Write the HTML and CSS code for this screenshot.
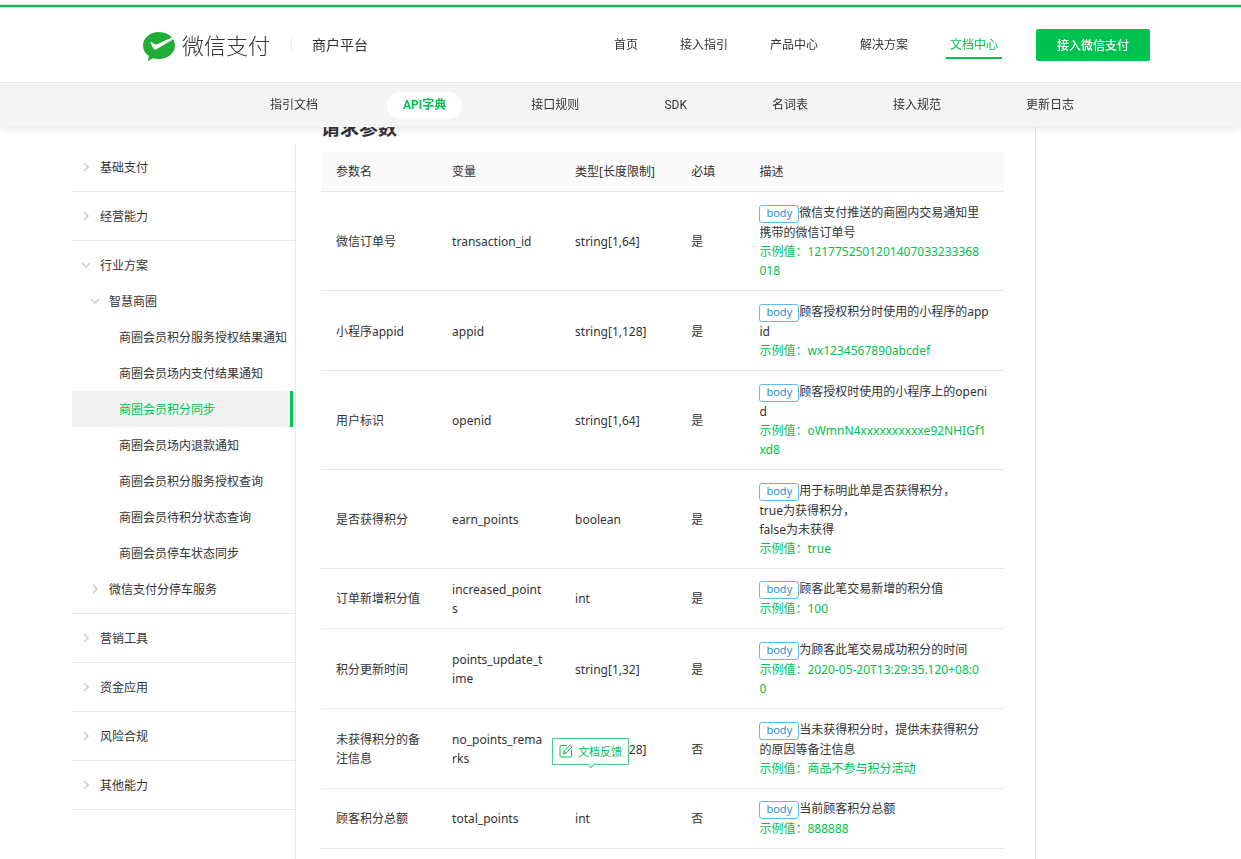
FILE: index.html
```
<!DOCTYPE html>
<html lang="zh-CN">
<head>
    <meta charset="UTF-8">
    <meta name="viewport" content="width=device-width, initial-scale=1.0">
    <title>微信支付商户平台文档中心</title>
    <link rel="stylesheet" href="styles.css">
</head>
<body>
    <svg class="symbols" width="0" height="0" aria-hidden="true">
        <symbol id="arrow" viewBox="0 0 10 10">
            <path d="M3 1l4 4-4 4" fill="none" stroke="currentColor" stroke-width="1.5"/>
        </symbol>
    </svg>

    <header class="page-header">
        <div class="top-line"></div>
        <div class="brand-bar">
            <a class="logo" href="#">
                <svg class="logo-icon" width="34" height="30" viewBox="0 0 34 30">
                    <path d="M17 0C8 0 1 6 1 13.5c0 4.3 2.2 8 5.800 10.5L6 29l5-2.800c1.900.6 3.900.8 6 .8 9 0 16-6 16-13.5 0-2.200-.6-4.300-1.700-6.200L14 17.5c-1 .5-2 .2-2.500-.8L8.600 10.900c-.3-.8.4-1.300 1-.9l3.300 2.300c.5.300 1 .4 1.600.1L30 5.400C27 2.100 22.300 0 17 0z" fill="#22ac38"/>
                </svg>
                <span class="logo-text">微信支付</span>
            </a>
            <span class="platform">商户平台</span>
            <nav class="main-nav">
                <a href="#">首页</a>
                <a href="#">接入指引</a>
                <a href="#">产品中心</a>
                <a href="#">解决方案</a>
                <a href="#" class="active">文档中心</a>
                <button class="join-button">接入微信支付</button>
            </nav>
        </div>
        <nav class="sub-nav">
            <a href="#">指引文档</a>
            <a href="#" class="active">API字典</a>
            <a href="#">接口规则</a>
            <a href="#">SDK</a>
            <a href="#">名词表</a>
            <a href="#">接入规范</a>
            <a href="#">更新日志</a>
        </nav>
    </header>

    <div class="container">
        <aside class="sidebar">
            <div class="group">
                <a href="#" class="level1"><svg class="arrow"><use href="#arrow"/></svg>基础支付</a>
            </div>
            <div class="group">
                <a href="#" class="level1"><svg class="arrow"><use href="#arrow"/></svg>经营能力</a>
            </div>
            <div class="group">
                <a href="#" class="level1"><svg class="arrow open"><use href="#arrow"/></svg>行业方案</a>
                <a href="#" class="level2"><svg class="arrow open"><use href="#arrow"/></svg>智慧商圈</a>
                <a href="#" class="level3">商圈会员积分服务授权结果通知</a>
                <a href="#" class="level3">商圈会员场内支付结果通知</a>
                <a href="#" class="level3 active">商圈会员积分同步</a>
                <a href="#" class="level3">商圈会员场内退款通知</a>
                <a href="#" class="level3">商圈会员积分服务授权查询</a>
                <a href="#" class="level3">商圈会员待积分状态查询</a>
                <a href="#" class="level3">商圈会员停车状态同步</a>
                <a href="#" class="level2"><svg class="arrow"><use href="#arrow"/></svg>微信支付分停车服务</a>
            </div>
            <div class="group">
                <a href="#" class="level1"><svg class="arrow"><use href="#arrow"/></svg>营销工具</a>
            </div>
            <div class="group">
                <a href="#" class="level1"><svg class="arrow"><use href="#arrow"/></svg>资金应用</a>
            </div>
            <div class="group">
                <a href="#" class="level1"><svg class="arrow"><use href="#arrow"/></svg>风险合规</a>
            </div>
            <div class="group">
                <a href="#" class="level1"><svg class="arrow"><use href="#arrow"/></svg>其他能力</a>
            </div>
        </aside>

        <main class="content">
            <h2>请求参数</h2>
            <table>
                <colgroup>
                    <col class="col-name">
                    <col class="col-field">
                    <col class="col-type">
                    <col class="col-required">
                    <col>
                </colgroup>
                <thead>
                    <tr>
                        <th>参数名</th>
                        <th>变量</th>
                        <th>类型[长度限制]</th>
                        <th>必填</th>
                        <th>描述</th>
                    </tr>
                </thead>
                <tbody>
                    <tr>
                        <td>微信订单号</td>
                        <td>transaction_id</td>
                        <td>string[1,64]</td>
                        <td>是</td>
                        <td><span class="tag">body</span>微信支付推送的商圈内交易通知里<br>携带的微信订单号<br><span class="sample">示例值：1217752501201407033233368<br>018</span></td>
                    </tr>
                    <tr>
                        <td>小程序appid</td>
                        <td>appid</td>
                        <td>string[1,128]</td>
                        <td>是</td>
                        <td><span class="tag">body</span>顾客授权积分时使用的小程序的app<br>id<br><span class="sample">示例值：wx1234567890abcdef</span></td>
                    </tr>
                    <tr>
                        <td>用户标识</td>
                        <td>openid</td>
                        <td>string[1,64]</td>
                        <td>是</td>
                        <td><span class="tag">body</span>顾客授权时使用的小程序上的openi<br>d<br><span class="sample">示例值：oWmnN4xxxxxxxxxxe92NHIGf1<br>xd8</span></td>
                    </tr>
                    <tr>
                        <td>是否获得积分</td>
                        <td>earn_points</td>
                        <td>boolean</td>
                        <td>是</td>
                        <td><span class="tag">body</span>用于标明此单是否获得积分，<br>true为获得积分，<br>false为未获得<br><span class="sample">示例值：true</span></td>
                    </tr>
                    <tr class="short">
                        <td>订单新增积分值</td>
                        <td>increased_point<br>s</td>
                        <td>int</td>
                        <td>是</td>
                        <td><span class="tag">body</span>顾客此笔交易新增的积分值<br><span class="sample">示例值：100</span></td>
                    </tr>
                    <tr>
                        <td>积分更新时间</td>
                        <td>points_update_t<br>ime</td>
                        <td>string[1,32]</td>
                        <td>是</td>
                        <td><span class="tag">body</span>为顾客此笔交易成功积分的时间<br><span class="sample">示例值：2020-05-20T13:29:35.120+08:0<br>0</span></td>
                    </tr>
                    <tr>
                        <td>未获得积分的备<br>注信息</td>
                        <td>no_points_rema<br>rks</td>
                        <td>string[1,128]</td>
                        <td>否</td>
                        <td><span class="tag">body</span>当未获得积分时，提供未获得积分<br>的原因等备注信息<br><span class="sample">示例值：商品不参与积分活动</span></td>
                    </tr>
                    <tr class="short">
                        <td>顾客积分总额</td>
                        <td>total_points</td>
                        <td>int</td>
                        <td>否</td>
                        <td><span class="tag">body</span>当前顾客积分总额<br><span class="sample">示例值：888888</span></td>
                    </tr>
                </tbody>
            </table>
        </main>
    </div>

    <button class="feedback">
        <svg width="14" height="14" viewBox="0 0 14 14" fill="none" stroke="currentColor">
            <path d="M8 1.5H2a1 1 0 0 0-1 1V12a1 1 0 0 0 1 1h9.5a1 1 0 0 0 1-1V6"/>
            <path d="M4.5 9.8l.6-2.600L11.300 1l1.900 1.800L7 9.200zM5.100 7.200L7 9.200"/>
        </svg>
        文档反馈
    </button>
</body>
</html>
```
FILE: styles.css
```
* {
    box-sizing: border-box;
}
body {
    margin: 0;
    font-family: "Noto Sans", "Noto Sans CJK SC", sans-serif;
    font-size: 12px;
    line-height: 19px;
    color: #333;
    background: #fff;
}
a {
    color: inherit;
    text-decoration: none;
}
button {
    font-family: inherit;
    cursor: pointer;
}
.symbols {
    position: absolute;
}

/* header */
.page-header {
    position: fixed;
    top: 0;
    left: 0;
    right: 0;
    z-index: 10;
    background: #fff;
    font-family: Roboto, "Noto Sans CJK SC", sans-serif;
    box-shadow: 0 2px 8px rgba(0, 0, 0, 0.1);
}
.top-line {
    margin-top: 4px;
    border-top: 1px solid #e5e5e5;
    border-bottom: 2px solid #00c250;
}
.brand-bar {
    display: flex;
    align-items: center;
    height: 75px;
    padding: 0 91px 0 142px;
}
.logo {
    display: flex;
    align-items: center;
    gap: 6px;
    padding-top: 4px;
    color: #333;
}
.logo-text {
    font-size: 22px;
    line-height: 30px;
    font-weight: 300;
}
.platform {
    margin-left: 21px;
    padding-left: 20px;
    border-left: 1px solid #eee;
    font-size: 14px;
    line-height: 14px;
}
.main-nav {
    display: flex;
    align-items: center;
    gap: 34px;
    margin-left: auto;
}
.main-nav a {
    padding: 6px 4px 2px;
    border-bottom: 2px solid transparent;
}
.main-nav .active {
    color: #00c250;
    border-bottom-color: #00c250;
}
.join-button {
    width: 114px;
    height: 32px;
    border: none;
    border-radius: 2px;
    background: #00c250;
    color: #fff;
    font-size: 12px;
    font-weight: 500;
}
.sub-nav {
    display: flex;
    align-items: center;
    justify-content: center;
    gap: 53px;
    height: 45px;
    padding-left: 103px;
    border-top: 1px solid #e7e7e7;
    background: #f4f4f4;
}
.sub-nav a {
    padding: 4px 16px;
    border-radius: 14px;
}
.sub-nav .active {
    background: #fff;
    color: #00c250;
    font-weight: bold;
}

/* page body */
.container {
    display: flex;
    min-height: 100vh;
    padding: 0 205px 0 72px;
}
.sidebar {
    width: 224px;
    flex-shrink: 0;
    margin-top: 143px;
    border-right: 1px solid #e7e7e7;
}
.group {
    padding: 6px 0;
    border-bottom: 1px solid #e7e7e7;
}
.group a {
    display: flex;
    align-items: center;
    height: 36px;
    margin-right: 2px;
}
.arrow {
    width: 10px;
    height: 10px;
    margin-right: 9px;
    color: #ccc;
}
.arrow.open {
    transform: rotate(90deg);
}
.level1 {
    padding-left: 9px;
}
.level2 {
    padding-left: 18px;
}
.level3 {
    padding-left: 47px;
    white-space: nowrap;
}
.group .active {
    background: #f2f2f2;
    border-right: 3px solid #00c250;
    color: #00c250;
}
.content {
    flex: 1;
    padding: 116px 31px 0 25px;
    border-right: 1px solid #e7e7e7;
}
h2 {
    margin: 0 0 12px;
    font-size: 19px;
    line-height: 24px;
}
table {
    width: 100%;
    table-layout: fixed;
    border-collapse: separate;
    border-spacing: 0;
}
.col-name {
    width: 17%;
}
.col-field {
    width: 18%;
}
.col-type {
    width: 17%;
}
.col-required {
    width: 10%;
}
th, td {
    padding: 10px 0 10px 15px;
    border-bottom: 1px solid #e7e7e7;
    text-align: left;
    font-weight: normal;
    white-space: nowrap;
}
th {
    background: #fafafa;
}
td {
    padding-top: 11px;
}
.short td {
    padding-top: 10px;
}
.tag {
    display: inline-block;
    height: 18px;
    padding: 0 6px;
    border: 1px solid #5bbcf5;
    border-radius: 3px;
    color: #2d8fd8;
    font-size: 11px;
    line-height: 14px;
}
.sample {
    color: #00c250;
}

/* floating feedback button */
.feedback {
    position: fixed;
    left: 552px;
    bottom: 94px;
    display: flex;
    align-items: center;
    gap: 5px;
    height: 27px;
    padding: 0 6px 2px;
    border: 1px solid #51cd8f;
    background: #fff;
    color: #00c250;
    font-size: 11px;
    white-space: nowrap;
}
.feedback::after {
    content: "";
    position: absolute;
    left: 35px;
    bottom: -3px;
    width: 5px;
    height: 5px;
    border: solid #51cd8f;
    border-width: 0 1px 1px 0;
    background: #fff;
    transform: rotate(45deg);
}
```
